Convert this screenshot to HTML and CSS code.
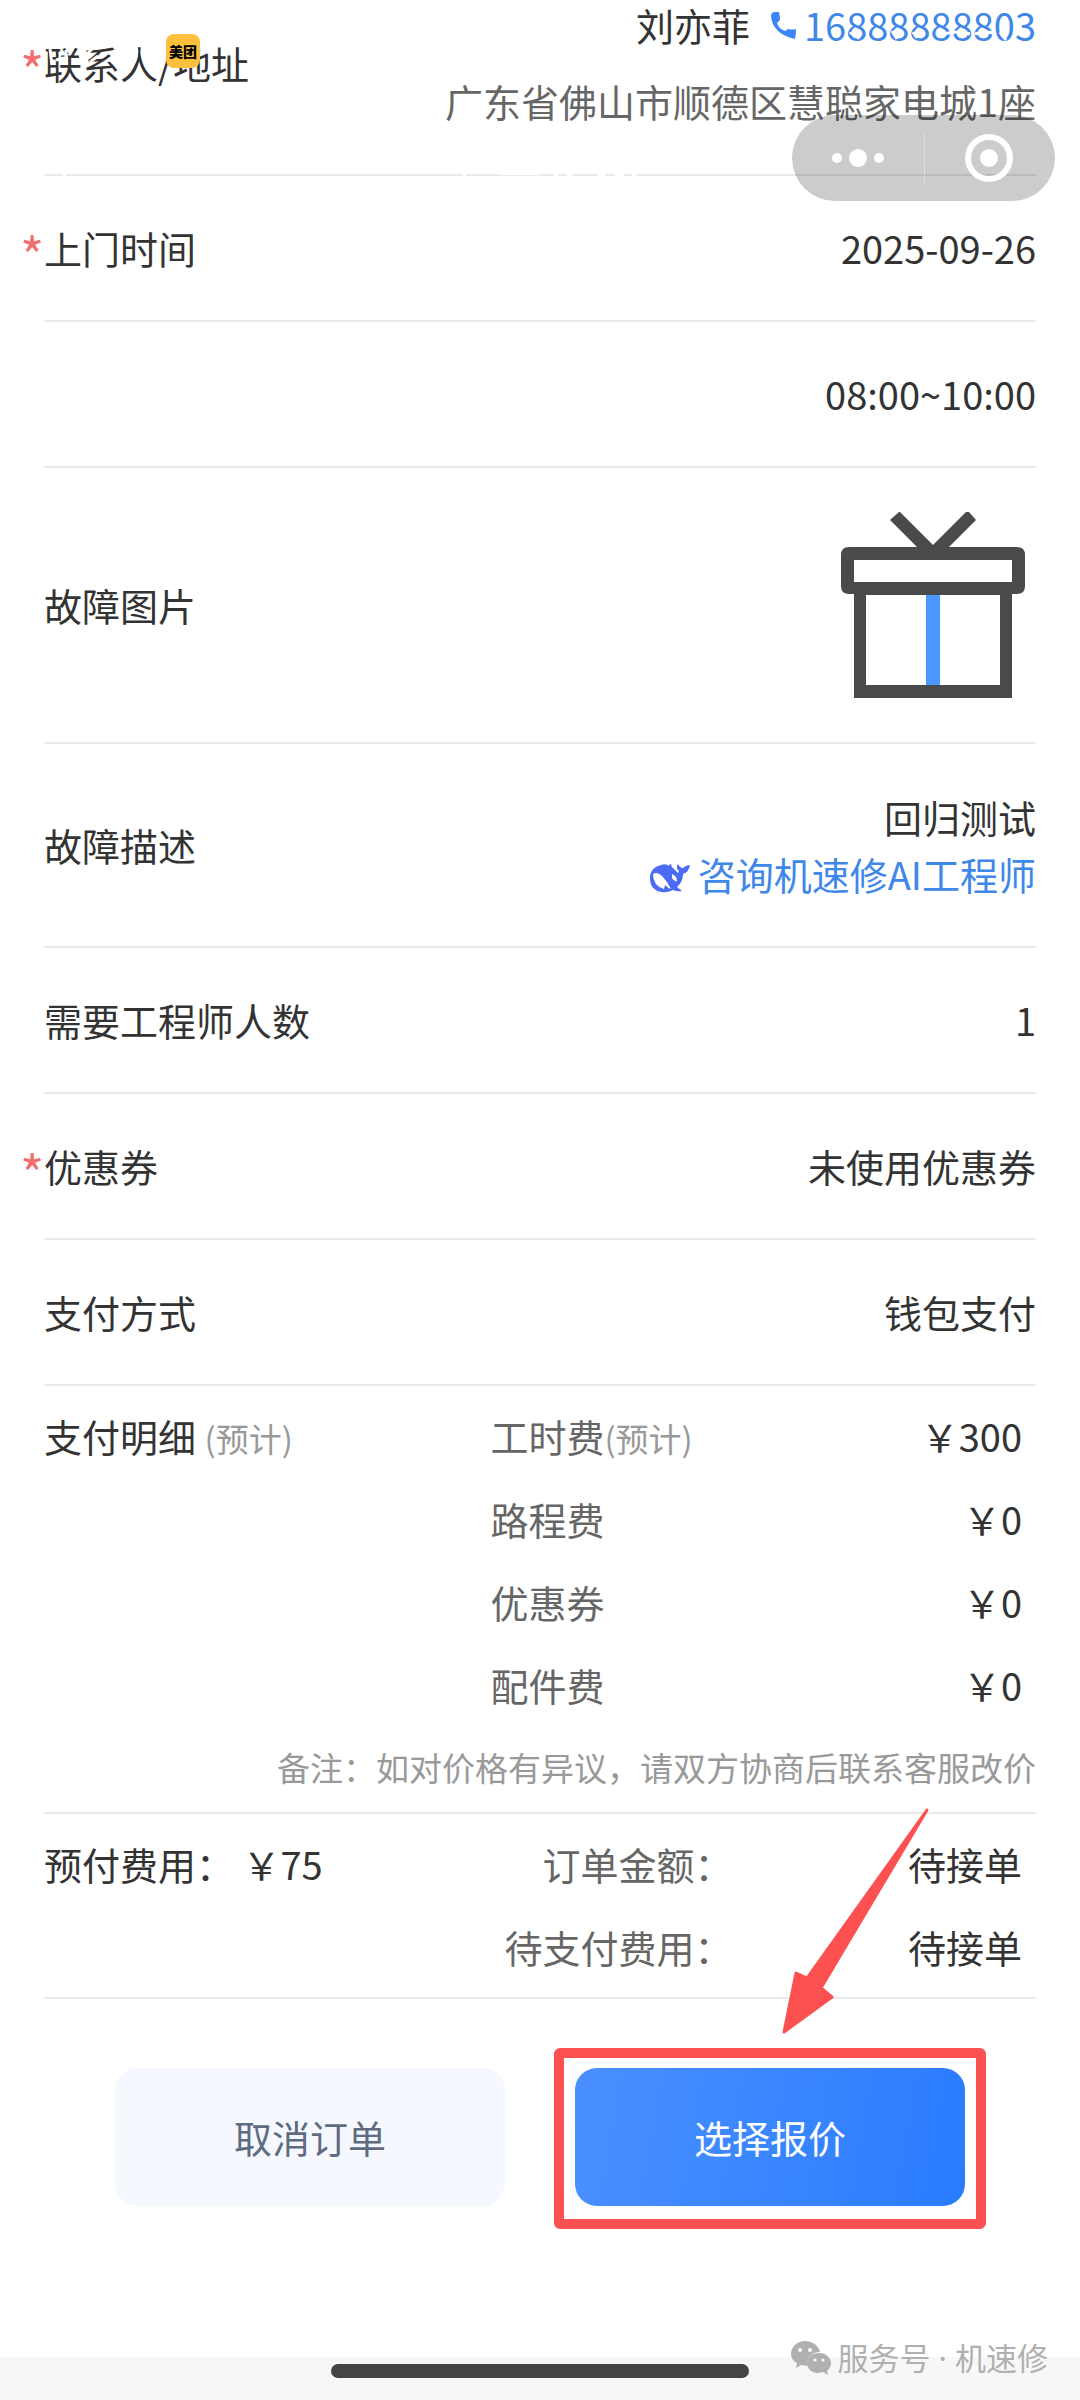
FILE: index.html
```html
<!DOCTYPE html>
<html lang="zh-CN">
<head>
<meta charset="utf-8">
<meta name="viewport" content="width=device-width, initial-scale=1">
<title>订单详情</title>
<link rel="stylesheet" href="styles.css">
</head>
<body>
<header class="overlay">
  <svg class="status-left" width="300" height="100" viewBox="0 0 300 100" aria-hidden="true">
    <g fill="none" stroke="#fff" stroke-width="3">
      <path d="M50 49l2 16M56 60l12-3M66 50v10M85 56l10-10M90 62l8-6M136 44c2 10 1 16-4 22M210 46h8"/>
    </g>
  </svg>
  <span class="app-badge">美团</span>
  <svg class="status-right" width="260" height="60" viewBox="0 0 260 60" aria-hidden="true">
    <g fill="none" stroke="#fff" stroke-width="3">
      <path d="M30 34q5-4 9 5M72 31l5 8M93 32l4 6M124 34q14-4 26 0M155 34q12-4 20 0M180 32l6 8"/>
    </g>
  </svg>
  <div class="capsule">
    <button class="capsule-btn" aria-label="更多">
      <svg width="52" height="20" viewBox="0 0 52 20"><g fill="#fff"><circle cx="5" cy="10" r="5"/><circle cx="26" cy="10" r="9"/><circle cx="47" cy="10" r="5"/></g></svg>
    </button>
    <button class="capsule-btn" aria-label="关闭">
      <svg width="50" height="50" viewBox="0 0 50 50"><circle cx="25" cy="25" r="21" fill="none" stroke="#fff" stroke-width="6"/><circle cx="25" cy="25" r="9" fill="#fff"/></svg>
    </button>
  </div>
</header>

<main class="order">
  <section class="row row-contact">
    <h2 class="label"><span class="required">*</span>联系人/地址</h2>
    <div class="contact">
      <div class="person">
        <span>刘亦菲</span>
        <a class="link" href="tel:16888888803">
          <svg width="26" height="28" viewBox="0 0 26 28" aria-hidden="true"><path fill="#3b86f7" d="M1 4Q2 1 5 1L9 1Q10 5 10 9L7 12Q9 18 15 20L18 18Q22 19 26 18Q26 23 25 28Q15 26 8 20Q1 13 1 4Z"/></svg>
          <span>16888888803</span>
        </a>
      </div>
      <div class="address">广东省佛山市顺德区慧聪家电城1座</div>
    </div>
    <svg class="rule-gaps" width="600" height="4" viewBox="0 0 600 4" aria-hidden="true"><path fill="#fff" d="M19 0h3v4h-3zM419 0h3v4h-3zM455 0h40v2h-40zM510 0h4v4h-4zM523 0h5v4h-5zM553 0h8v4h-8zM571 0h9v4h-9zM588 0h4v4h-4z"/></svg>
  </section>
  <section class="row">
    <h2 class="label"><span class="required">*</span>上门时间</h2>
    <span>2025-09-26</span>
  </section>
  <section class="row row-end">
    <span>08:00~10:00</span>
  </section>
  <section class="row row-photo">
    <h2 class="label">故障图片</h2>
    <svg width="206" height="206" viewBox="0 0 206 206" role="img" aria-label="故障图片">
      <path fill="#4a4a4a" d="M60 18L69 10H70L103 43L136 10H139L146 18L119 45H187Q195 45 195 53V84Q195 92 187 92H182V196H24V92H19Q11 92 11 84V53Q11 45 19 45H87Z"/>
      <path fill="#fff" d="M24 58H182V80H24ZM36 93H170V183H36Z"/>
      <path fill="#4a98ff" d="M96 93H110V183H96Z"/>
    </svg>
  </section>
  <section class="row row-desc">
    <h2 class="label">故障描述</h2>
    <div class="desc">
      <span>回归测试</span>
      <a class="link" href="#ai">
        <svg width="41" height="38" viewBox="0 -8 41 38" aria-hidden="true">
          <path fill="#4b6bf5" d="M12 2Q17 0 20 3Q20 1 22 1Q22 4 25 6L29 10Q31 8 28 6Q27 3 29 1Q31 5 34 5Q37 2 41 2Q40 9 34 11Q34 19 28 24L33 28Q28 29 24 27Q18 30 12 29Q2 27 1 17Q0 5 12 2Z"/>
          <path fill="#fff" d="M4 11Q8 8 13 13Q18 18 22 26Q19 25 16 22L15 26Q4 23 4 11ZM23 11Q28 13 28 18Q25 19 23 15Z"/>
        </svg>
        <span>咨询机速修AI工程师</span>
      </a>
    </div>
  </section>
  <section class="row">
    <h2 class="label">需要工程师人数</h2>
    <span>1</span>
  </section>
  <section class="row">
    <h2 class="label"><span class="required">*</span>优惠券</h2>
    <span>未使用优惠券</span>
  </section>
  <section class="row">
    <h2 class="label">支付方式</h2>
    <span>钱包支付</span>
  </section>
  <section class="fees">
    <div class="fees-body">
      <h2 class="label fees-title">支付明细 <small>(预计)</small></h2>
      <dl class="fee-list">
        <div class="fee"><dt>工时费<small>(预计)</small></dt><dd>￥300</dd></div>
        <div class="fee"><dt>路程费</dt><dd>￥0</dd></div>
        <div class="fee"><dt>优惠券</dt><dd>￥0</dd></div>
        <div class="fee"><dt>配件费</dt><dd>￥0</dd></div>
      </dl>
    </div>
    <p class="note">备注：如对价格有异议，请双方协商后联系客服改价</p>
  </section>
  <section class="fees fees-total">
    <div class="fees-body">
      <h2 class="label fees-title">预付费用： ￥75</h2>
      <dl class="fee-list">
        <div class="fee"><dt>订单金额：</dt><dd>待接单</dd></div>
        <div class="fee"><dt>待支付费用：</dt><dd>待接单</dd></div>
      </dl>
    </div>
  </section>
</main>

<div class="actions">
  <button class="btn btn-cancel">取消订单</button>
  <div class="highlighted">
    <button class="btn btn-primary">选择报价</button>
    <svg class="pointer" width="432" height="422" viewBox="0 0 432 422" aria-hidden="true">
      <rect x="5" y="246" width="422" height="171" rx="1" fill="none" stroke="#fc5150" stroke-width="10" stroke-linejoin="round"/>
      <path fill="#fc5150" stroke="#fc5150" stroke-width="3" stroke-linejoin="round" d="M373 3L253 171L242 166L230 225L278 190L267 181Z"/>
    </svg>
  </div>
</div>

<footer class="bottom-bar">
  <div class="home-indicator"></div>
  <div class="watermark">
    <svg width="41" height="34" viewBox="0 0 41 34" aria-hidden="true">
      <path fill="#b0b0b0" d="M14 0C22 0 28 5 29 11C21 11 16 16 16 22L17 25L10 24L5 27L6 22C2 20 0 16 0 13C0 6 6 0 14 0Z"/>
      <path fill="#b0b0b0" d="M28 12C35 12 40 17 40 22C40 26 38 28 36 30L37 34L32 31C23 34 16 29 16 22C16 16 21 12 28 12Z"/>
      <g fill="#fff"><circle cx="9" cy="9" r="2"/><circle cx="19" cy="9" r="2"/><circle cx="24" cy="19" r="1.6"/><circle cx="32" cy="19" r="1.6"/></g>
    </svg>
    <span>服务号 · 机速修</span>
  </div>
</footer>
</body>
</html>
```

FILE: styles.css
```css
* { box-sizing: border-box; }

body {
  position: relative;
  display: flex;
  flex-direction: column;
  min-height: 100vh;
  margin: 0;
  background: #fff;
  color: #333;
  font-family: "Noto Sans CJK SC", sans-serif;
  font-size: 38px;
  line-height: 50px;
}

h2, dl, dd, p { margin: 0; }
h2 { font-size: inherit; font-weight: 400; }
svg { display: block; flex: none; }
small { color: #999; font-size: 33px; line-height: 1; }

button {
  padding: 0;
  border: 0;
  background: none;
  font: inherit;
}

/* Floating status items and the mini-program capsule */
.overlay {
  position: absolute;
  inset: 0 0 auto;
  z-index: 1;
}
.status-left { position: absolute; top: 0; left: 0; }
.status-right { position: absolute; top: 0; right: 0; }
.app-badge {
  position: absolute;
  top: 34px;
  left: 166px;
  width: 34px;
  height: 34px;
  border-radius: 8px;
  background: #fdc03c;
  color: #000;
  font-size: 14px;
  font-weight: 900;
  line-height: 34px;
  text-align: center;
}
.capsule {
  position: absolute;
  top: 115px;
  right: 25px;
  display: flex;
  width: 263px;
  height: 86px;
  border-radius: 43px;
  background: rgba(0, 0, 0, 0.2);
}
.capsule-btn {
  display: flex;
  flex: 1;
  align-items: center;
  justify-content: center;
}
.capsule-btn + .capsule-btn {
  background: linear-gradient(#dadada, #dadada) left / 1px 52px no-repeat;
}

.order { padding: 0 44px; }

.row {
  position: relative;
  display: flex;
  align-items: center;
  justify-content: space-between;
  padding: 47px 0;
  border-bottom: 2px solid #eaeaea;
}
.row-contact { padding: 0 0 48px; }
.row-end { justify-content: flex-end; }
.row-photo { padding: 34px 0; }
.row-desc { padding: 44px 0; }

.label { position: relative; }
.required {
  position: absolute;
  top: 6px;
  left: -24px;
  color: #f07070;
  font-size: 52px;
}

.contact,
.desc {
  display: flex;
  flex-direction: column;
  align-items: flex-end;
}
.contact { gap: 26px; }
.person { display: flex; gap: 20px; }
.address { color: #666; }
.desc { line-height: 57px; }

.link {
  display: flex;
  gap: 8px;
  align-items: center;
  color: #3f87e8;
  text-decoration: none;
}
.rule-gaps {
  position: absolute;
  bottom: -3px;
  left: 0;
}

.fees {
  padding: 8px 0 4px;
  border-bottom: 2px solid #eaeaea;
  line-height: 83px;
}
.fees-total { padding-bottom: 9px; }
.fees-body { display: flex; }
.fees-title { width: 45%; }
.fee-list { flex: 1; padding-right: 14px; }
.fee {
  display: flex;
  justify-content: space-between;
}
.fee dt { color: #666; }
.fees-total dt { width: 242px; text-align: right; }
.note {
  color: #999;
  font-size: 33px;
  line-height: 82px;
  text-align: right;
}

.actions {
  display: flex;
  gap: 70px;
  padding: 69px 115px;
}
.highlighted {
  position: relative;
  flex: 1;
}
.btn {
  flex: 1;
  height: 138px;
  border-radius: 22px;
}
.btn-cancel { background: #f5f8ff; color: #5f6b80; }
.btn-primary {
  width: 100%;
  background: linear-gradient(100deg, #4a90ff, #2a7cff);
  color: #fff;
}
.pointer {
  position: absolute;
  right: -21px;
  bottom: -23px;
  pointer-events: none;
}

.bottom-bar {
  position: relative;
  height: 43px;
  margin-top: auto;
  padding-top: 7px;
  background: #f7f7f7;
}
.home-indicator {
  width: 418px;
  height: 14px;
  margin: 0 auto;
  border-radius: 7px;
  background: #444;
}
.watermark {
  position: absolute;
  right: 32px;
  bottom: 18px;
  display: flex;
  gap: 6px;
  align-items: center;
  color: #b0b0b0;
  font-family: "Noto Sans", "Noto Sans CJK SC", sans-serif;
  font-size: 31px;
  line-height: 48px;
}
```
